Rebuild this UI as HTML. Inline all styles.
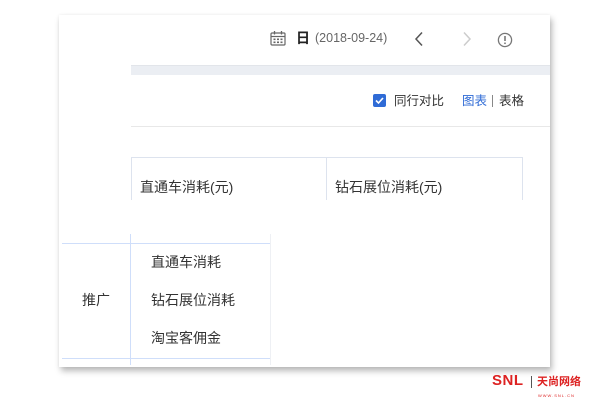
<!DOCTYPE html>
<html><head><meta charset="utf-8"><style>
*{margin:0;padding:0;box-sizing:border-box}
html,body{width:600px;height:405px;background:#fff;overflow:hidden;position:relative;font-family:"Liberation Sans","Noto Sans CJK SC",sans-serif;color:#333}
.card{position:absolute;left:59px;top:15px;width:491px;height:352px;background:#fff;box-shadow:2px 4px 6px rgba(0,0,0,.28),0 0 3px rgba(0,0,0,.06)}
.a{position:absolute}
.t{position:absolute;font-size:14px;white-space:nowrap;line-height:16px}
</style></head><body>
<div class="card"></div>
<svg class="a" style="left:270px;top:31px" width="16" height="15" viewBox="0 0 16 15"><rect x="1" y="2" width="14" height="12" rx="1" fill="none" stroke="#666" stroke-width="1.2"/><line x1="1" y1="5.5" x2="15" y2="5.5" stroke="#666" stroke-width="1.2"/><line x1="4.5" y1="0" x2="4.5" y2="3.5" stroke="#666" stroke-width="1.3"/><line x1="11.5" y1="0" x2="11.5" y2="3.5" stroke="#666" stroke-width="1.3"/><g fill="#666"><rect x="3.5" y="7.5" width="2" height="1.6"/><rect x="7" y="7.5" width="2" height="1.6"/><rect x="10.5" y="7.5" width="2" height="1.6"/><rect x="3.5" y="10.5" width="2" height="1.6"/><rect x="7" y="10.5" width="2" height="1.6"/><rect x="10.5" y="10.5" width="2" height="1.6"/></g></svg>
<div class="t" style="left:296px;top:30px;font-weight:bold;color:#222;font-size:14px">日</div>
<div class="t" style="left:315px;top:30px;color:#666;font-size:12.5px">(2018-09-24)</div>
<svg class="a" style="left:413px;top:31px" width="12" height="16"><polyline points="9,1.5 3,8 9,14.5" fill="none" stroke="#555" stroke-width="1.5"/></svg>
<svg class="a" style="left:461px;top:31px" width="12" height="16"><polyline points="3,1.5 9,8 3,14.5" fill="none" stroke="#ccc" stroke-width="1.5"/></svg>
<svg class="a" style="left:497px;top:32px" width="16" height="16"><circle cx="8" cy="8" r="6.6" fill="none" stroke="#777" stroke-width="1.3"/><line x1="8" y1="4" x2="8" y2="9" stroke="#777" stroke-width="1.6"/><circle cx="8" cy="11.3" r="0.9" fill="#777"/></svg>
<div class="a" style="left:131px;top:65px;width:419px;height:10px;background:#ebeef3;border-top:1px solid #e2e5ea"></div>
<div class="a" style="left:373px;top:94px;width:13px;height:13px;background:#2f6bd6;border-radius:2px"></div>
<svg class="a" style="left:373px;top:94px" width="13" height="13"><polyline points="3,6.5 5.5,9 10,4" fill="none" stroke="#fff" stroke-width="1.6"/></svg>
<div class="t" style="left:394px;top:93px;color:#333;font-size:12.5px">同行对比</div>
<div class="t" style="left:462px;top:93px;color:#2f6bd6;font-size:12.5px">图表</div>
<div class="a" style="left:492px;top:95px;width:1px;height:12px;background:#888"></div>
<div class="t" style="left:499px;top:93px;color:#333;font-size:12.5px">表格</div>
<div class="a" style="left:131px;top:126px;width:419px;height:1px;background:#e8e8e8"></div>
<div class="a" style="left:131px;top:157px;width:392px;height:1px;background:#dde3ee"></div>
<div class="a" style="left:131px;top:157px;width:1px;height:43px;background:#dde3ee"></div>
<div class="a" style="left:326px;top:157px;width:1px;height:43px;background:#dde3ee"></div>
<div class="a" style="left:522px;top:157px;width:1px;height:43px;background:#dde3ee"></div>
<div class="t" style="left:140px;top:179px">直通车消耗(元)</div>
<div class="t" style="left:335px;top:179px">钻石展位消耗(元)</div>
<div class="a" style="left:62px;top:243px;width:209px;height:1px;background:#cfdefa"></div>
<div class="a" style="left:62px;top:358px;width:209px;height:1px;background:#cfdefa"></div>
<div class="a" style="left:130px;top:234px;width:1px;height:131px;background:#cfdefa"></div>
<div class="a" style="left:270px;top:234px;width:1px;height:131px;background:#eef0f4"></div>
<div class="t" style="left:82px;top:292px">推广</div>
<div class="t" style="left:151px;top:254px">直通车消耗</div>
<div class="t" style="left:151px;top:292px">钻石展位消耗</div>
<div class="t" style="left:151px;top:330px">淘宝客佣金</div>
<div class="t" style="left:492px;top:373px;color:#d22;font-weight:bold;font-size:15px;letter-spacing:0.5px">SNL</div>
<div class="a" style="left:531px;top:376px;width:1px;height:12px;background:#555"></div>
<div class="t" style="left:537px;top:374px;color:#d22;font-weight:bold;font-size:11px">天尚网络</div>
<div class="t" style="left:538px;top:388px;color:#d22;font-size:4px;letter-spacing:1px">WWW.SNL.CN</div>
</body></html>
